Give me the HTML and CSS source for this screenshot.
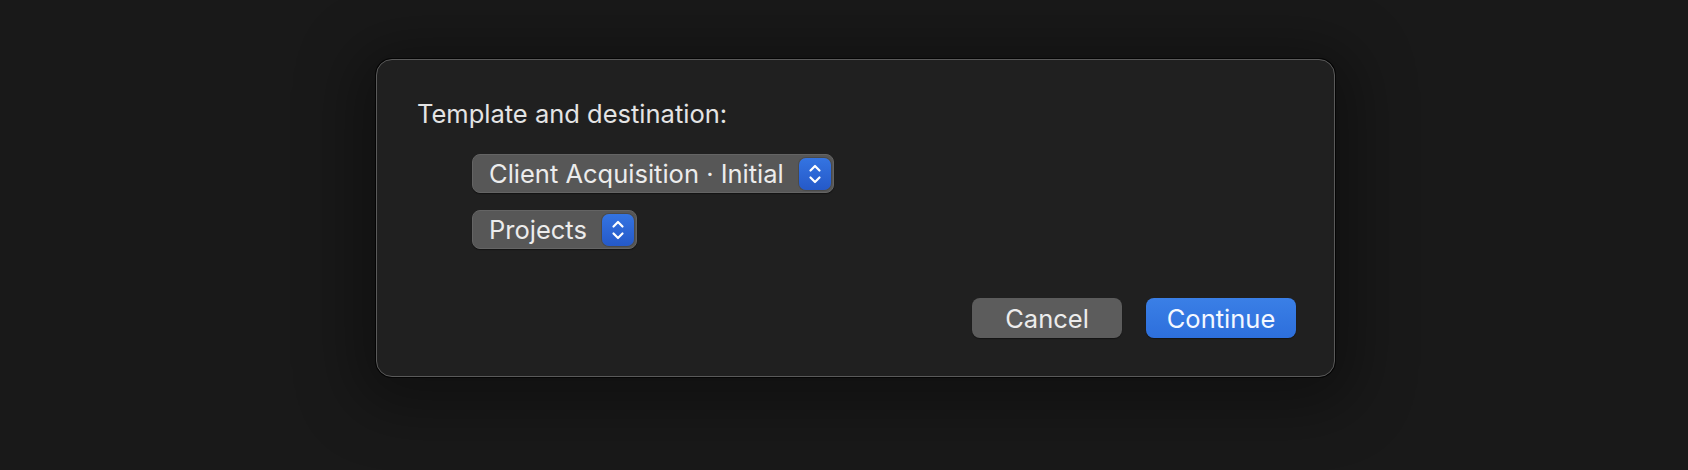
FILE: index.html
```html
<!DOCTYPE html>
<html>
<head>
<meta charset="utf-8">
<link rel="stylesheet" href="styles.css">
</head>
<body>
<div class="stage">
  <div class="dialog">
    <div class="label">Template and destination:</div>
    <div class="popups">
      <div class="popup">
        <span class="popup-text">Client Acquisition · Initial</span>
        <span class="stepper"><svg width="14" height="24" viewBox="0 0 14 24"><path d="M2.5 8.5 L7 4 L11.5 8.5 M2.5 15.5 L7 20 L11.5 15.5" fill="none" stroke="#fff" stroke-width="2.2" stroke-linecap="round" stroke-linejoin="round"/></svg></span>
      </div>
      <div class="popup">
        <span class="popup-text">Projects</span>
        <span class="stepper"><svg width="14" height="24" viewBox="0 0 14 24"><path d="M2.5 8.5 L7 4 L11.5 8.5 M2.5 15.5 L7 20 L11.5 15.5" fill="none" stroke="#fff" stroke-width="2.2" stroke-linecap="round" stroke-linejoin="round"/></svg></span>
      </div>
    </div>
    <div class="buttons">
      <button class="btn btn-cancel">Cancel</button>
      <button class="btn btn-primary">Continue</button>
    </div>
  </div>
</div>
</body>
</html>
```
FILE: styles.css
```css
html, body {
  margin: 0;
  padding: 0;
  background: #191919;
  width: 1688px;
  height: 470px;
  overflow: hidden;
  font-family: Inter, "Liberation Sans", sans-serif;
}
.stage {
  padding: 59px 0 0 376px;
}
.dialog {
  box-sizing: border-box;
  width: 959px;
  height: 318px;
  background: #202020;
  border-radius: 16px;
  border: 1px solid #5a5a5a;
  box-shadow: 0 0 0 1px #050505, 0 10px 60px 20px rgba(0,0,0,0.35);
  padding: 40px 38px 38px 40px;
  display: flex;
  flex-direction: column;
}
.label {
  color: #e4e4e4;
  font-size: 25.5px;
  line-height: 28px;
}
.popups {
  margin-top: 26px;
  margin-left: 55px;
  display: flex;
  flex-direction: column;
  align-items: flex-start;
  gap: 17px;
}
.popup {
  box-sizing: border-box;
  height: 39px;
  display: flex;
  align-items: center;
  background: #575757;
  border-radius: 8px;
  border: 1px solid #646464;
  padding: 0 2px 0 16px;
  box-shadow: 0 1px 1px rgba(0,0,0,0.4);
}
.popup-text {
  color: #ececec;
  font-size: 25.5px;
  line-height: 30px;
  margin-right: 15px;
}
.stepper {
  width: 32px;
  height: 32px;
  border-radius: 7px;
  background: linear-gradient(#3474e2, #2559c8);
  display: flex;
  align-items: center;
  justify-content: center;
  box-shadow: 0 0 0 1px rgba(0,0,0,0.15);
}
.buttons {
  margin-top: auto;
  display: flex;
  justify-content: flex-end;
  gap: 24px;
}
.btn {
  width: 150px;
  height: 40px;
  border: none;
  border-radius: 8px;
  font-family: inherit;
  font-size: 25.5px;
  color: #ececec;
  padding: 0;
}
.btn-cancel {
  background: #5c5c5c;
  box-shadow: 0 1px 1px rgba(0,0,0,0.4);
}
.btn-primary {
  background: linear-gradient(#3a7fe6, #2d6fdc);
  color: #f4f8ff;
  box-shadow: 0 1px 1px rgba(0,0,0,0.4);
}
```
